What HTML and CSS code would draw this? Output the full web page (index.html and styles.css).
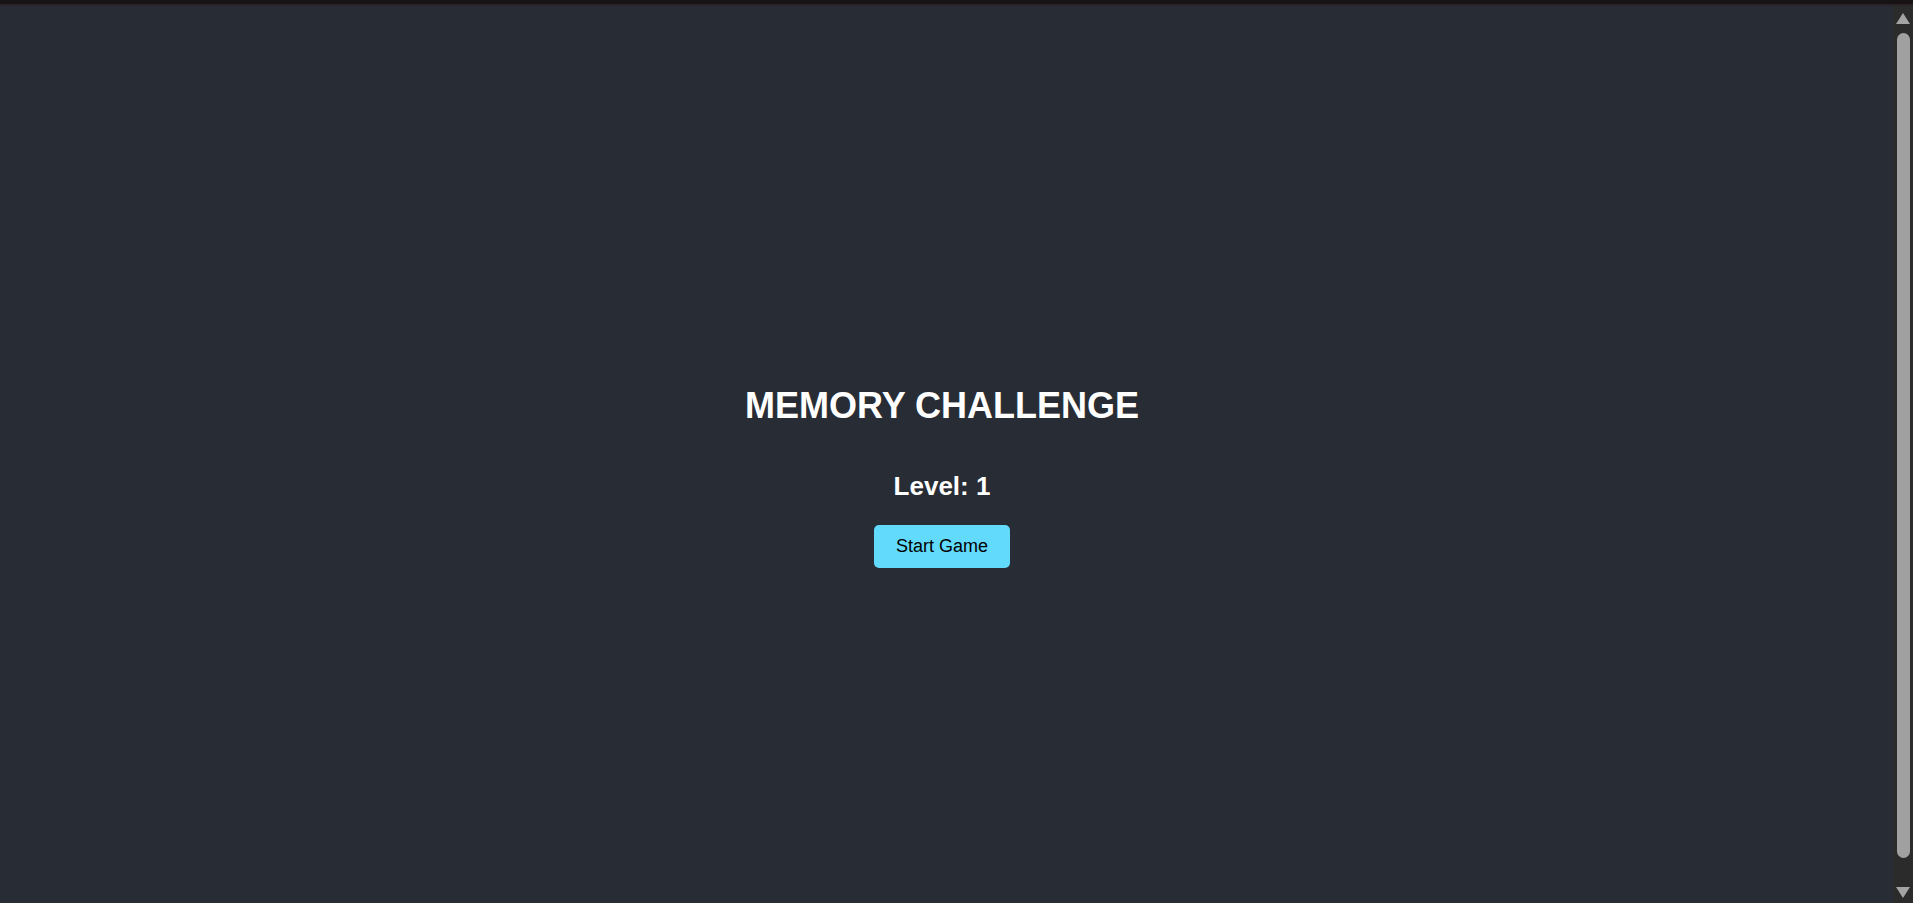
FILE: index.html
```html
<!DOCTYPE html>
<html lang="en">
<head>
<meta charset="utf-8">
<title>Memory Challenge</title>
<link rel="stylesheet" href="styles.css">
</head>
<body>
<div class="topbar"></div>
<main class="app">
  <h1 class="title">MEMORY CHALLENGE</h1>
  <h2 class="level">Level: 1</h2>
  <button class="start-btn" type="button">Start Game</button>
</main>
<div class="scrollbar" aria-hidden="true">
  <svg class="sb-arrow" width="14" height="11" viewBox="0 0 14 11"><polygon points="7,0 14,11 0,11" fill="#a3a3a3"/></svg>
  <div class="sb-thumb"></div>
  <svg class="sb-arrow" width="14" height="11" viewBox="0 0 14 11"><polygon points="0,0 14,0 7,11" fill="#a3a3a3"/></svg>
</div>
</body>
</html>
```

FILE: styles.css
```css
html {
  background: #282c34;
}

body {
  margin: 0;
  background: #282c34;
  color: #ffffff;
  font-family: "Liberation Sans", Arial, Helvetica, sans-serif;
  overflow: hidden;
}

.topbar {
  height: 4px;
  background: #171314;
  border-bottom: 2px solid #2a2429;
}

.app {
  box-sizing: border-box;
  height: calc(100vh - 6px);
  padding: 43px 29px 0 0;
  display: flex;
  flex-direction: column;
  align-items: center;
  justify-content: center;
  text-align: center;
}

.title {
  margin: 0;
  font-size: 36px;
  font-weight: bold;
}

.level {
  margin: 44px 0 23px;
  font-size: 26px;
  font-weight: bold;
}

.start-btn {
  font-family: "Liberation Sans", Arial, Helvetica, sans-serif;
  font-size: 18px;
  color: #000000;
  background: #61dafb;
  border: none;
  border-radius: 5px;
  padding: 11px 22px;
  cursor: pointer;
}

.scrollbar {
  position: fixed;
  top: 6px;
  right: 0;
  width: 20px;
  height: calc(100vh - 6px);
  box-sizing: border-box;
  padding: 7px 0 5px;
  background: #2b2b2b;
  display: flex;
  flex-direction: column;
  align-items: center;
}

.sb-arrow {
  flex: none;
  display: block;
}

.sb-thumb {
  flex: 1;
  width: 13px;
  margin: 9px 0 29px;
  border-radius: 7px;
  background: #a0a0a0;
}
```
